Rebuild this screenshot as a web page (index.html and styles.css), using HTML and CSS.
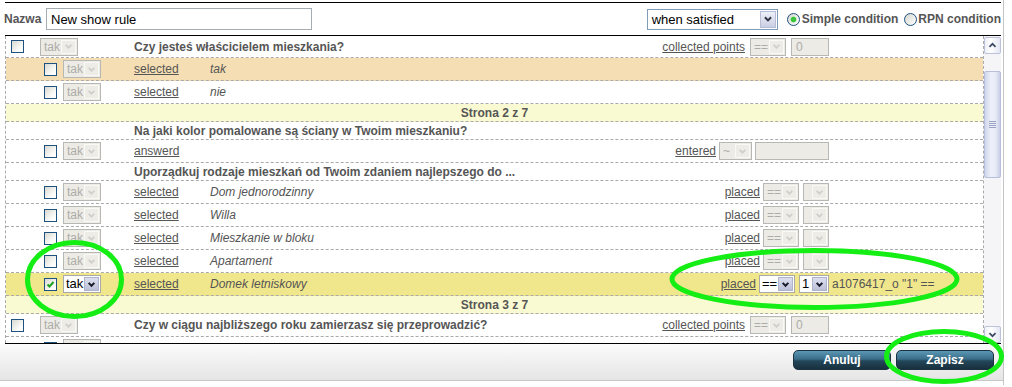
FILE: index.html
```html
<!DOCTYPE html>
<html lang="pl">
<head>
<meta charset="utf-8">
<title>Show rule</title>
<link rel="stylesheet" href="styles.css">
</head>
<body>
<div class="page">
  <div class="dialog">
    <div class="main">
      <div class="namebar">
        <span class="label">Nazwa</span>
        <span class="name-input">New show rule</span>
        <span class="bigsel"><span class="bigsel-v">when satisfied</span><span class="bigsel-b"><svg viewBox="0 0 16 16"><path d="M4.5 6l3.5 3.5L11.5 6"/></svg></span></span>
        <span class="rd on"></span><span class="rlabel">Simple condition</span>
        <span class="rd"></span><span class="rlabel last">RPN condition</span>
      </div>
      <div class="listwrap">
        <div class="list">
          <div class="row q first">
            <div class="lead"><span class="cb"></span><span class="sel dis w38"><span class="sv">tak</span><span class="sb"><svg viewBox="0 0 16 16"><path d="M4.5 6l3.5 3.5L11.5 6"/></svg></span></span></div>
            <div class="qtext">Czy jesteś właścicielem mieszkania?</div>
            <div class="ctl g5"><span class="lnk">collected points</span><span class="sel dis w36"><span class="sv">==</span><span class="sb"><svg viewBox="0 0 16 16"><path d="M4.5 6l3.5 3.5L11.5 6"/></svg></span></span><span class="inp dis w38">0</span></div>
            <div class="rpn"></div>
          </div>
          <div class="row opt chosen">
            <div class="lead"><span class="cb"></span><span class="sel dis w38"><span class="sv">tak</span><span class="sb"><svg viewBox="0 0 16 16"><path d="M4.5 6l3.5 3.5L11.5 6"/></svg></span></span></div>
            <div class="link"><span class="lnk">selected</span></div>
            <div class="val">tak</div>
            <div class="rpn"></div>
          </div>
          <div class="row opt">
            <div class="lead"><span class="cb"></span><span class="sel dis w38"><span class="sv">tak</span><span class="sb"><svg viewBox="0 0 16 16"><path d="M4.5 6l3.5 3.5L11.5 6"/></svg></span></span></div>
            <div class="link"><span class="lnk">selected</span></div>
            <div class="val">nie</div>
            <div class="rpn"></div>
          </div>
          <div class="row pg">Strona 2 z 7</div>
          <div class="row qt">
            <div class="lead"></div>
            <div class="qtext">Na jaki kolor pomalowane są ściany w Twoim mieszkaniu?</div>
          </div>
          <div class="row opt">
            <div class="lead"><span class="cb"></span><span class="sel dis w38"><span class="sv">tak</span><span class="sb"><svg viewBox="0 0 16 16"><path d="M4.5 6l3.5 3.5L11.5 6"/></svg></span></span></div>
            <div class="link"><span class="lnk">answerd</span></div>
            <div class="val"></div>
            <div class="ctl g3"><span class="lnk">entered</span><span class="sel dis w33"><span class="sv">~</span><span class="sb"><svg viewBox="0 0 16 16"><path d="M4.5 6l3.5 3.5L11.5 6"/></svg></span></span><span class="inp dis w74"></span></div>
            <div class="rpn"></div>
          </div>
          <div class="row qt">
            <div class="lead"></div>
            <div class="qtext">Uporządkuj rodzaje mieszkań od Twoim zdaniem najlepszego do ...</div>
          </div>
          <div class="row opt">
            <div class="lead"><span class="cb"></span><span class="sel dis w38"><span class="sv">tak</span><span class="sb"><svg viewBox="0 0 16 16"><path d="M4.5 6l3.5 3.5L11.5 6"/></svg></span></span></div>
            <div class="link"><span class="lnk">selected</span></div>
            <div class="val">Dom jednorodzinny</div>
            <div class="ctl g34"><span class="lnk">placed</span><span class="sel dis w36"><span class="sv">==</span><span class="sb"><svg viewBox="0 0 16 16"><path d="M4.5 6l3.5 3.5L11.5 6"/></svg></span></span><span class="sel dis w26"><span class="sv"></span><span class="sb"><svg viewBox="0 0 16 16"><path d="M4.5 6l3.5 3.5L11.5 6"/></svg></span></span></div>
            <div class="rpn"></div>
          </div>
          <div class="row opt">
            <div class="lead"><span class="cb"></span><span class="sel dis w38"><span class="sv">tak</span><span class="sb"><svg viewBox="0 0 16 16"><path d="M4.5 6l3.5 3.5L11.5 6"/></svg></span></span></div>
            <div class="link"><span class="lnk">selected</span></div>
            <div class="val">Willa</div>
            <div class="ctl g34"><span class="lnk">placed</span><span class="sel dis w36"><span class="sv">==</span><span class="sb"><svg viewBox="0 0 16 16"><path d="M4.5 6l3.5 3.5L11.5 6"/></svg></span></span><span class="sel dis w26"><span class="sv"></span><span class="sb"><svg viewBox="0 0 16 16"><path d="M4.5 6l3.5 3.5L11.5 6"/></svg></span></span></div>
            <div class="rpn"></div>
          </div>
          <div class="row opt">
            <div class="lead"><span class="cb"></span><span class="sel dis w38"><span class="sv">tak</span><span class="sb"><svg viewBox="0 0 16 16"><path d="M4.5 6l3.5 3.5L11.5 6"/></svg></span></span></div>
            <div class="link"><span class="lnk">selected</span></div>
            <div class="val">Mieszkanie w bloku</div>
            <div class="ctl g34"><span class="lnk">placed</span><span class="sel dis w36"><span class="sv">==</span><span class="sb"><svg viewBox="0 0 16 16"><path d="M4.5 6l3.5 3.5L11.5 6"/></svg></span></span><span class="sel dis w26"><span class="sv"></span><span class="sb"><svg viewBox="0 0 16 16"><path d="M4.5 6l3.5 3.5L11.5 6"/></svg></span></span></div>
            <div class="rpn"></div>
          </div>
          <div class="row opt">
            <div class="lead"><span class="cb"></span><span class="sel dis w38"><span class="sv">tak</span><span class="sb"><svg viewBox="0 0 16 16"><path d="M4.5 6l3.5 3.5L11.5 6"/></svg></span></span></div>
            <div class="link"><span class="lnk">selected</span></div>
            <div class="val">Apartament</div>
            <div class="ctl g34"><span class="lnk">placed</span><span class="sel dis w36"><span class="sv">==</span><span class="sb"><svg viewBox="0 0 16 16"><path d="M4.5 6l3.5 3.5L11.5 6"/></svg></span></span><span class="sel dis w26"><span class="sv"></span><span class="sb"><svg viewBox="0 0 16 16"><path d="M4.5 6l3.5 3.5L11.5 6"/></svg></span></span></div>
            <div class="rpn"></div>
          </div>
          <div class="row opt active">
            <div class="lead"><span class="cb checked"><svg viewBox="0 0 11 11"><path d="M2.5 5.5l2 2 4-4.5"/></svg></span><span class="sel en w38"><span class="sv">tak</span><span class="sb"><svg viewBox="0 0 16 16"><path d="M4.5 6l3.5 3.5L11.5 6"/></svg></span></span></div>
            <div class="link"><span class="lnk">selected</span></div>
            <div class="val">Domek letniskowy</div>
            <div class="ctl g34"><span class="lnk">placed</span><span class="sel en w36"><span class="sv">==</span><span class="sb"><svg viewBox="0 0 16 16"><path d="M4.5 6l3.5 3.5L11.5 6"/></svg></span></span><span class="sel en w30"><span class="sv">1</span><span class="sb"><svg viewBox="0 0 16 16"><path d="M4.5 6l3.5 3.5L11.5 6"/></svg></span></span></div>
            <div class="rpn">a1076417_o "1" ==</div>
          </div>
          <div class="row pg">Strona 3 z 7</div>
          <div class="row q">
            <div class="lead"><span class="cb"></span><span class="sel dis w38"><span class="sv">tak</span><span class="sb"><svg viewBox="0 0 16 16"><path d="M4.5 6l3.5 3.5L11.5 6"/></svg></span></span></div>
            <div class="qtext">Czy w ciągu najbliższego roku zamierzasz się przeprowadzić?</div>
            <div class="ctl g5"><span class="lnk">collected points</span><span class="sel dis w36"><span class="sv">==</span><span class="sb"><svg viewBox="0 0 16 16"><path d="M4.5 6l3.5 3.5L11.5 6"/></svg></span></span><span class="inp dis w38">0</span></div>
            <div class="rpn"></div>
          </div>
          <div class="row opt">
            <div class="lead"><span class="cb"></span><span class="sel dis w38"><span class="sv">tak</span><span class="sb"><svg viewBox="0 0 16 16"><path d="M4.5 6l3.5 3.5L11.5 6"/></svg></span></span></div>
            <div class="link"><span class="lnk">selected</span></div>
            <div class="val">tak</div>
            <div class="rpn"></div>
          </div>
        </div>
        <div class="scrollbar">
          <span class="sbtn up"><svg viewBox="0 0 15 15"><path d="M4 9l3.5-3.5L11 9"/></svg></span>
          <span class="track-a"></span>
          <span class="thumb"><span class="grip"></span></span>
          <span class="track-b"></span>
          <span class="sbtn down"><svg viewBox="0 0 15 15"><path d="M4 6l3.5 3.5L11 6"/></svg></span>
        </div>
      </div>
    </div>
    <div class="footer">
      <button class="btn">Anuluj</button>
      <button class="btn">Zapisz</button>
    </div>
  </div>
  <svg class="marks" width="1012" height="387" viewBox="0 0 1012 387">
    <ellipse cx="74.5" cy="279.5" rx="47" ry="37"/>
    <ellipse cx="814.5" cy="279" rx="142.5" ry="28.5"/>
    <ellipse cx="944" cy="356.5" rx="57.5" ry="25"/>
  </svg>
</div>
</body>
</html>
```

FILE: styles.css
```css
* { box-sizing: border-box; }
html, body { margin: 0; padding: 0; background: #fff; }
body {
  font-family: "Liberation Sans", Arial, sans-serif;
  font-size: 12px;
  color: #555;
}
.page { position: relative; width: 1012px; height: 387px; overflow: hidden; }
.dialog {
  width: 1004px;
  height: 385px;
  border-right: 1px solid #c4c4c4;
}
.main { margin-left: 5px; width: 996px; padding-top: 2px; }

/* name bar */
.namebar {
  height: 34px;
  border-top: 1px solid #000;
  border-bottom: 1px solid #000;
  display: flex;
  align-items: center;
}
.label { font-weight: bold; margin-left: -1px; width: 42px; }
.name-input {
  width: 266px;
  height: 22px;
  border: 1px solid #a5acb2;
  font-size: 13px;
  color: #000;
  padding-left: 4px;
  display: flex;
  align-items: center;
}
.bigsel {
  margin-left: auto;
  width: 131px;
  height: 21px;
  border: 1px solid #7f9db9;
  display: flex;
  background: #fff;
}
.bigsel-v { flex: 1; font-size: 13px; color: #000; padding-left: 4px; line-height: 19px; }
.bigsel-b {
  width: 16px;
  margin: 1px;
  border: 1px solid #b6bdd4;
  background: linear-gradient(#eef0f8, #c9cee2);
  display: flex;
  align-items: center;
  justify-content: center;
}
.bigsel-b svg { width: 14px; height: 14px; fill: none; stroke: #2c3146; stroke-width: 2.2; }
.rd {
  width: 13px;
  height: 13px;
  border-radius: 50%;
  border: 1px solid #1c5180;
  background: linear-gradient(135deg, #d6d6cf, #fff);
  margin-left: 9px;
}
.rd.on { background: radial-gradient(circle, #3bc43b 0 2.3px, #8fe08f 2.8px, transparent 3.3px), linear-gradient(135deg, #d6d6cf, #fff); }
.rlabel { font-weight: bold; margin-left: 2px; }
.rlabel.last { margin-left: 1px; }
.rd + .rlabel + .rd { margin-left: 6px; }

/* list */
.listwrap {
  display: flex;
  height: 308px;
  border-bottom: 1px solid #000;
}
.list {
  width: 979px;
  height: 307px;
  border-left: 1px dashed #aaa;
  border-right: 1px dashed #aaa;
  overflow: hidden;
}
.row {
  display: flex;
  align-items: center;
  height: 23px;
  border-bottom: 1px dashed #aaa;
  white-space: nowrap;
}
.row.first { height: 22px; }
.row.qt { height: 18px; }
.row.pg {
  height: 18px;
  justify-content: center;
  font-weight: bold;
  background: #fafad2;
}
.row.chosen { background: #f5deb3; }
.row.active { background: #f0e68c; }
.lead { width: 128px; display: flex; align-items: center; flex-shrink: 0; }
.q .lead { padding-left: 5px; }
.q .lead .cb { margin-right: 16px; }
.opt .lead { padding-left: 38px; }
.opt .lead .cb { margin-right: 6px; }
.qtext { flex: 1; font-weight: bold; }
.link { width: 76px; flex-shrink: 0; }
.val { flex: 1; font-style: italic; }
.ctl { display: flex; align-items: center; justify-content: flex-end; }
.ctl.g5 .lnk { margin-right: 5px; }
.ctl.g5 .sel { margin-right: 5px; }
.ctl.g3 .lnk { margin-right: 3px; }
.ctl.g3 .sel { margin-right: 3px; }
.ctl.g34 .lnk { margin-right: 3px; }
.ctl.g34 .sel + .sel { margin-left: 4px; }
.rpn { width: 154px; flex-shrink: 0; padding-left: 3px; }
.lnk { text-decoration: underline; color: #555; }

/* checkbox */
.cb {
  width: 13px;
  height: 13px;
  border: 1px solid #1c5180;
  background: linear-gradient(135deg, #d9d9d2, #fbfbf9 70%, #fff);
  flex-shrink: 0;
  display: flex;
}
.cb svg { width: 11px; height: 11px; fill: none; stroke: #21a121; stroke-width: 2; }

/* select */
.sel {
  display: flex;
  height: 18px;
  border: 1px solid #b7b7b4;
  background: #ecebe5;
  flex-shrink: 0;
}
.sv { flex: 1; padding-left: 3px; line-height: 16px; color: #acaca8; overflow: hidden; }
.sb {
  width: 15px;
  margin: 1px 1px 1px 0;
  border: 1px solid #f9f9f6;
  background: #edece6;
  display: flex;
  align-items: center;
  justify-content: center;
}
.sb svg { width: 13px; height: 13px; fill: none; stroke: #cfcfcb; stroke-width: 2.2; }
.sel.en { background: #fff; border-color: #a9a9a9; }
.sel.en .sv { color: #000; font-size: 13px; padding-left: 2px; }
.sel.en .sb { background: linear-gradient(#dcdfee, #bbc0d8); border-color: #aeb3cc; }
.sel.en .sb svg { stroke: #1a1c2a; stroke-width: 2.5; }
.w38 { width: 38px; }
.w36 { width: 36px; }
.w33 { width: 33px; }
.w30 { width: 30px; }
.w26 { width: 26px; }
.w74 { width: 74px; }
.inp {
  height: 18px;
  border: 1px solid #b7b7b4;
  background: #ecebe5;
  color: #acaca8;
  padding-left: 4px;
  line-height: 16px;
  flex-shrink: 0;
}

/* scrollbar */
.scrollbar {
  width: 17px;
  height: 307px;
  display: flex;
  flex-direction: column;
  background: #f5f5f8;
}
.sbtn {
  height: 17px;
  border: 1px solid #bcc3d9;
  border-radius: 2px;
  background: linear-gradient(90deg, #eef0f8, #fff 40%, #e3e6f3);
  display: flex;
  align-items: center;
  justify-content: center;
  flex-shrink: 0;
}
.sbtn.up { margin-top: 1px; }
.sbtn svg { width: 13px; height: 13px; fill: none; stroke: #3d4a66; stroke-width: 2; }
.track-a { height: 17px; flex-shrink: 0; }
.thumb {
  height: 107px;
  border: 1px solid #b6bedb;
  border-radius: 2px;
  background: linear-gradient(90deg, #cfd5ec, #eef0f9 40%, #e8ebf6 70%, #c8cfe8);
  display: flex;
  align-items: center;
  justify-content: center;
  flex-shrink: 0;
}
.grip {
  width: 7px;
  height: 7px;
  background: repeating-linear-gradient(#9aa3c4 0 1px, transparent 1px 2px);
}
.track-b { flex: 1; }

/* footer */
.footer {
  height: 37px;
  border-bottom: 1px solid #c8c8c8;
  background: linear-gradient(#fbfbfb, #e5e5e5);
  display: flex;
  justify-content: flex-end;
  align-items: flex-start;
  padding-top: 6px;
  padding-right: 9px;
  gap: 5px;
}
.btn {
  width: 98px;
  height: 20px;
  border: 1px solid #1b3340;
  border-radius: 5px;
  background: linear-gradient(#5b97b5, #3a6d88 45%, #23475a 55%, #18303d);
  color: #fff;
  font-family: "Liberation Sans", Arial, sans-serif;
  font-weight: bold;
  font-size: 12px;
  padding: 0;
}

/* annotations */
.marks { position: absolute; left: 0; top: 0; pointer-events: none; }
.marks ellipse { fill: none; stroke: #14ee14; stroke-width: 5; }
```
